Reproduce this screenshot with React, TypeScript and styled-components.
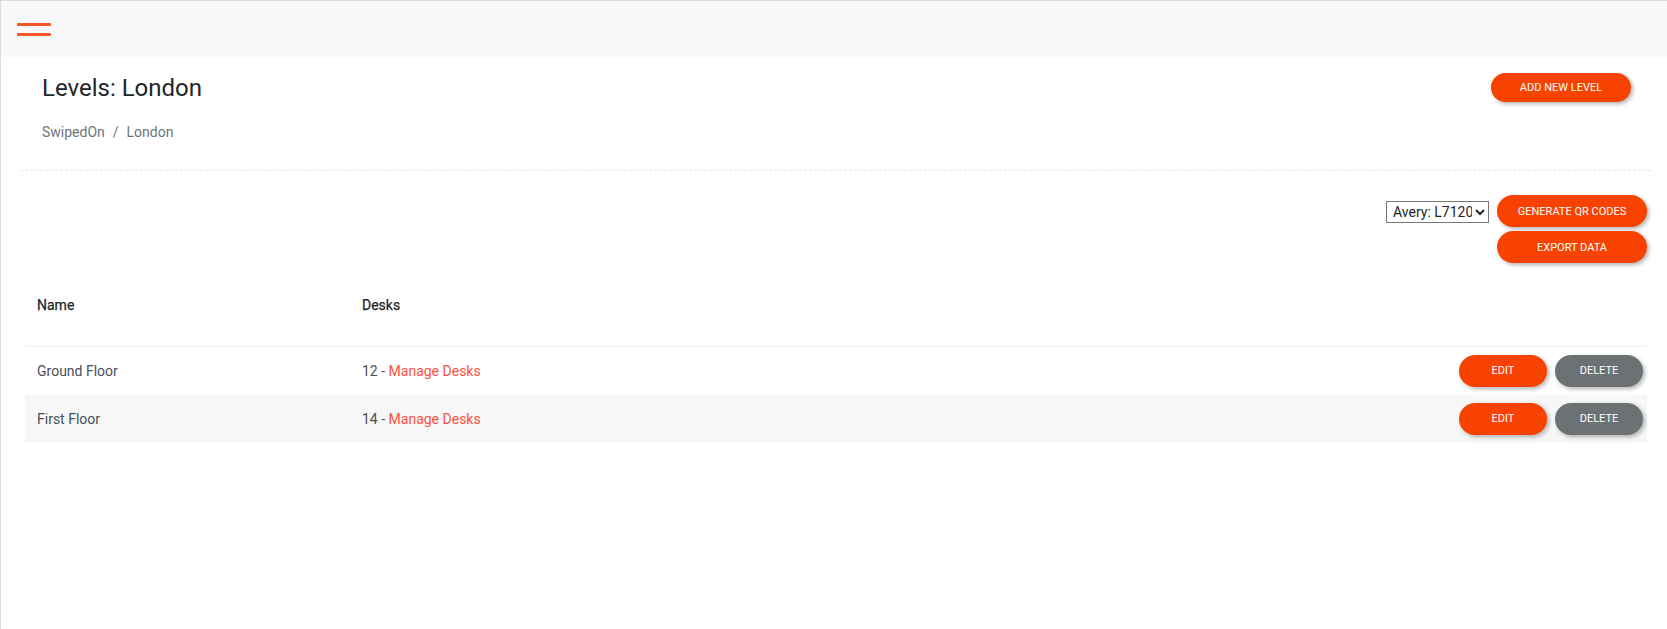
import React from 'react';
import styled, { createGlobalStyle } from 'styled-components';

// Data
interface Level {
  name: string;
  desks: number;
}

const levels: Level[] = [
  { name: 'Ground Floor', desks: 12 },
  { name: 'First Floor', desks: 14 },
];

const GlobalStyle = createGlobalStyle`
  html, body {
    margin: 0;
    padding: 0;
    background: #fff;
  }
  * {
    box-sizing: border-box;
  }
  body {
    font-family: Roboto, "Liberation Sans", Arial, sans-serif;
    color: #495057;
  }
`;

// Styled components
const Page = styled.div`
  min-height: 100vh;
  border-top: 1px solid #dcdcdc;
  border-left: 1px solid #dcdcdc;
`;

const NavBar = styled.header`
  height: 56px;
  background: #f8f9fa;
  display: flex;
  align-items: center;
  padding-left: 16px;
`;

const MenuButton = styled.button`
  width: 34px;
  height: 20px;
  padding: 0;
  border: none;
  background: none;
  display: flex;
  flex-direction: column;
  justify-content: center;
  gap: 7px;
  cursor: pointer;

  span {
    display: block;
    height: 3px;
    width: 100%;
    background: #f7562a;
    border-radius: 1px;
  }
`;

const Main = styled.main`
  padding: 0 16px 0 19px;
`;

const PageHeader = styled.div`
  display: flex;
  justify-content: space-between;
  align-items: flex-start;
  padding: 16px 20px 28px 22px;
  border-bottom: 1px dashed #e6e6e6;
`;

const TitleBlock = styled.div`
  display: flex;
  flex-direction: column;
  gap: 20px;
  margin-top: 1px;
`;

const Title = styled.h1`
  margin: 0;
  font-size: 24px;
  line-height: 28px;
  font-weight: 400;
  color: #212529;
`;

const Breadcrumb = styled.nav`
  display: flex;
  gap: 8px;
  font-size: 14px;
  line-height: 20px;
  color: #6c757d;
`;

const Button = styled.button<{ variant?: 'primary' | 'secondary'; width: number; height?: number }>`
  width: ${props => props.width}px;
  height: ${props => props.height ?? 32}px;
  border: none;
  border-radius: 16px;
  background: ${props => props.variant === 'secondary' ? '#6c7274' : '#f84200'};
  color: #fff;
  font-family: Roboto, "Liberation Sans", Arial, sans-serif;
  font-size: 11px;
  text-transform: uppercase;
  box-shadow: 2px 2px 4px rgba(0, 0, 0, 0.3);
  cursor: pointer;
  padding: 0;
`;

const Toolbar = styled.div`
  display: flex;
  justify-content: flex-end;
  align-items: flex-start;
  gap: 8px;
  margin-top: 24px;
  padding-right: 4px;
`;

const LabelSelect = styled.select`
  margin-top: 6px;
  height: 22px;
  width: 103px;
  font-family: Roboto, "Liberation Sans", Arial, sans-serif;
  font-size: 14px;
  color: #212529;
  border: 1px solid #767676;
  border-radius: 0;
  background: #fff;
  padding: 0 0 0 2px;
`;

const ButtonStack = styled.div`
  display: flex;
  flex-direction: column;
  gap: 4px;
`;

const Table = styled.table`
  width: calc(100% - 9px);
  margin: 19px 4px 0 5px;
  border-collapse: collapse;
  font-size: 14px;
  line-height: 20px;
`;

const HeadCell = styled.th<{ width?: number }>`
  text-align: left;
  font-weight: 400;
  color: #212529;
  -webkit-text-stroke: 0.25px #212529;
  padding: 13px 12px 31px;
  border-bottom: 1px solid #eeeeee;
  ${props => props.width ? `width: ${props.width}px;` : ''}
`;

const Row = styled.tr<{ striped: boolean }>`
  background: ${props => props.striped ? '#f7f7f7' : 'transparent'};
`;

const Cell = styled.td`
  height: 48px;
  padding: 0 12px;
  text-align: left;
  color: #495057;
`;

const ActionCell = styled(Cell)`
  padding: 0 4px 0 12px;
`;

const Actions = styled.div`
  display: flex;
  justify-content: flex-end;
  gap: 8px;
`;

const ManageLink = styled.a`
  color: #f9523d;
  text-decoration: none;
  cursor: pointer;
`;

export default function App() {
  return (
    <>
      <GlobalStyle />
      <Page>
        <NavBar>
          <MenuButton aria-label="menu">
            <span />
            <span />
          </MenuButton>
        </NavBar>
        <Main>
          <PageHeader>
            <TitleBlock>
              <Title>Levels: London</Title>
              <Breadcrumb>
                <span>SwipedOn</span>
                <span>/</span>
                <span>London</span>
              </Breadcrumb>
            </TitleBlock>
            <Button width={140} height={29}>Add New Level</Button>
          </PageHeader>

          <Toolbar>
            <LabelSelect defaultValue="L7120">
              <option value="L7120">Avery: L7120</option>
              <option value="L7160">Avery: L7160</option>
            </LabelSelect>
            <ButtonStack>
              <Button width={150}>Generate QR Codes</Button>
              <Button width={150}>Export Data</Button>
            </ButtonStack>
          </Toolbar>

          <Table>
            <thead>
              <tr>
                <HeadCell width={325}>Name</HeadCell>
                <HeadCell>Desks</HeadCell>
                <HeadCell />
              </tr>
            </thead>
            <tbody>
              {levels.map((level, i) => (
                <Row key={level.name} striped={i % 2 === 1}>
                  <Cell>{level.name}</Cell>
                  <Cell>
                    {level.desks} - <ManageLink>Manage Desks</ManageLink>
                  </Cell>
                  <ActionCell>
                    <Actions>
                      <Button width={88}>Edit</Button>
                      <Button width={88} variant="secondary">Delete</Button>
                    </Actions>
                  </ActionCell>
                </Row>
              ))}
            </tbody>
          </Table>
        </Main>
      </Page>
    </>
  );
}
